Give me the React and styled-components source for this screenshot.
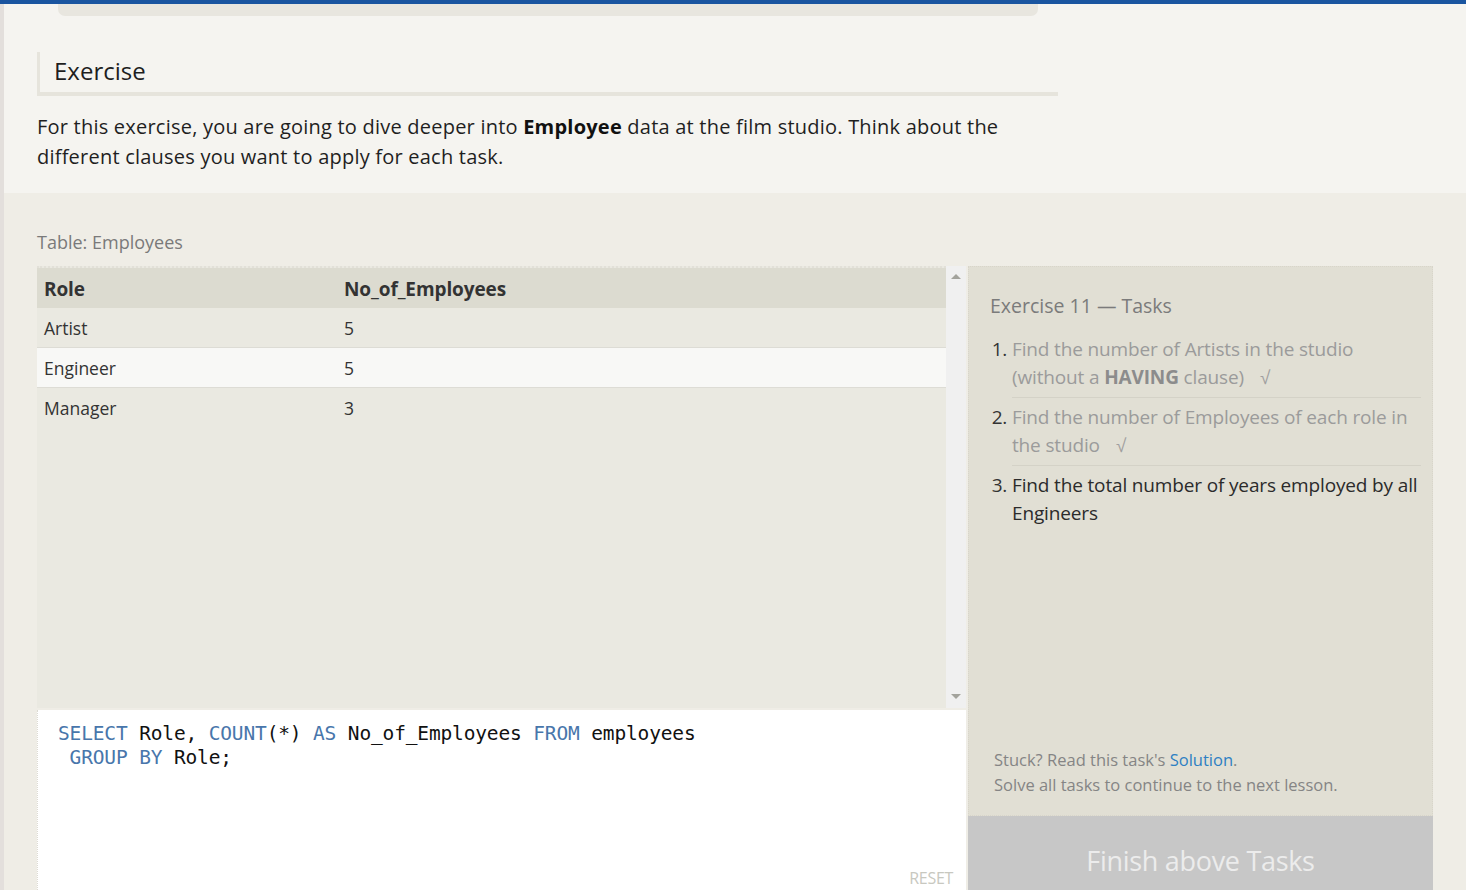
import React from "react";
import styled, { createGlobalStyle } from "styled-components";

const GlobalStyle = createGlobalStyle`
  html, body { margin: 0; padding: 0; }
  body {
    background: #efede6;
    font-family: "Open Sans", "Noto Sans", sans-serif;
    color: #333;
    overflow: hidden;
  }
`;

const TopBar = styled.div`
  height: 4px;
  background: #1a55a0;
`;

const Shell = styled.div`
  display: flex;
`;

const LeftStrip = styled.div`
  width: 4px;
  flex: none;
  background: #e3dfdc;
`;

const Main = styled.main`
  flex: 1;
  min-width: 0;
`;

const Intro = styled.section`
  background: #f5f4f0;
  padding: 0 0 21px 33px;
`;

const TabStrip = styled.div`
  margin-left: 21px;
  width: 980px;
  height: 12px;
  background: #e8e6df;
  border-radius: 0 0 7px 7px;
`;

const Heading = styled.h2`
  margin: 36px 0 0;
  width: 1004px;
  padding: 5px 0 7px 14px;
  border-left: 3px solid #e6e4dc;
  border-bottom: 4px solid #e6e4dc;
  font-family: "Open Sans", sans-serif;
  font-weight: 400;
  font-size: 24px;
  line-height: 28px;
  letter-spacing: 0;
  color: #1e1e1e;
`;

const Lead = styled.p`
  margin: 16px 0 0;
  font-size: 20px;
  line-height: 30px;
  color: #1f1f1f;
  letter-spacing: 0.22px;
  b { font-weight: 700; color: #111; }
`;

const Workspace = styled.section`
  padding: 37px 33px 0 33px;
`;

const Caption = styled.div`
  font-size: 18px;
  line-height: 24px;
  color: #7a7a7a;
  margin-bottom: 12px;
`;

const Grid = styled.div`
  display: grid;
  grid-template-columns: 929px 465px;
  column-gap: 2px;
`;

const LeftCol = styled.div`
  display: flex;
  flex-direction: column;
  gap: 2px;
`;

const TableFrame = styled.div`
  display: flex;
  height: 442px;
`;

const TableArea = styled.div`
  flex: 1;
  background: #eae9e1;
  border-top: 2px dotted #e2e0d8;
`;

const DataTable = styled.table`
  width: 100%;
  border-collapse: collapse;
  font-size: 17.5px;
`;

const HeadCell = styled.th`
  box-sizing: border-box;
  text-align: left;
  font-weight: 700;
  font-size: 19px;
  letter-spacing: -0.1px;
  color: #333;
  background: #dcdbd0;
  height: 40px;
  padding: 2px 7px 0;
  width: ${(p) => p.$w || "auto"};
`;

const Row = styled.tr`
  background: ${(p) => (p.$hl ? "#f8f8f6" : "transparent")};
  border-top: ${(p) => (p.$hl ? "1px solid #dddcd5" : "none")};
  border-bottom: ${(p) => (p.$hl ? "1px solid #dddcd5" : "none")};
`;

const Cell = styled.td`
  height: 39px;
  padding: 0 7px;
  color: #333;
`;

const Scrollbar = styled.div`
  width: 20px;
  background: #f0f0f0;
  display: flex;
  flex-direction: column;
  justify-content: space-between;
  align-items: center;
  padding: 8px 0 9px;
  box-sizing: border-box;
`;

const Arrow = styled.div`
  width: 0;
  height: 0;
  border-left: 5px solid transparent;
  border-right: 5px solid transparent;
  ${(p) =>
    p.$down
      ? "border-top: 5px solid #a3a39c;"
      : "border-bottom: 5px solid #a3a39c;"}
`;

const Editor = styled.div`
  position: relative;
  height: 190px;
  background: #fff;
  border-left: 1px dotted #dcdad2;
  padding: 12px 20px;
  box-sizing: border-box;
`;

const Code = styled.pre`
  margin: 0;
  font-family: "DejaVu Sans Mono", "Liberation Mono", monospace;
  font-size: 19.5px;
  line-height: 24px;
  color: #111;
  letter-spacing: -0.15px;
`;

const Kw = styled.span`
  color: #4876ab;
`;

const Reset = styled.span`
  position: absolute;
  right: 13px;
  top: 157px;
  font-size: 16px;
  line-height: 22px;
  color: #c8c8c0;
  letter-spacing: -0.3px;
`;

const RightCol = styled.div`
  display: flex;
  flex-direction: column;
`;

const TaskPanel = styled.div`
  height: 550px;
  box-sizing: border-box;
  background: #e1dfd4;
  border: 1px dotted #d8d5ca;
  padding: 25px 11px 18px 21px;
  display: flex;
  flex-direction: column;
`;

const TaskTitle = styled.h3`
  margin: 0;
  font-weight: 400;
  font-size: 19.5px;
  line-height: 28px;
  color: #7b7b7b;
`;

const TaskList = styled.ol`
  margin: 15px 0 0;
  padding: 0 0 0 22px;
  font-size: 19px;
  line-height: 28px;
  letter-spacing: -0.15px;
`;

const Task = styled.li`
  padding: 0 0 5px 0;
  margin-bottom: 5px;
  border-bottom: ${(p) => (p.$last ? "none" : "1px solid #d4d2c7")};
  color: ${(p) => (p.$done ? "#9b9b9b" : "#2b2b2b")};
  &::marker { color: #333; }
  b { color: #8c8c8c; font-weight: 700; }
`;

const Check = styled.span`
  margin-left: 16px;
  color: #a0a0a0;
  font-family: "Liberation Sans", sans-serif;
  font-size: 19px;
`;

const Help = styled.div`
  margin-top: auto;
  font-size: 16.5px;
  line-height: 25px;
  color: #858585;
  padding-left: 4px;
`;

const Link = styled.a`
  color: #2e7fc3;
  text-decoration: none;
`;

const FinishButton = styled.button`
  height: 88px;
  padding: 0;
  border: none;
  background: #c7c7c7;
  color: #ececec;
  font-family: "Open Sans", sans-serif;
  font-size: 27px;
  letter-spacing: -0.3px;
  cursor: default;
`;

const rows = [
  ["Artist", "5"],
  ["Engineer", "5"],
  ["Manager", "3"],
];

export default function App() {
  return (
    <>
      <GlobalStyle />
      <TopBar />
      <Shell>
        <LeftStrip />
        <Main>
          <Intro>
            <TabStrip />
            <Heading>Exercise</Heading>
            <Lead>
              For this exercise, you are going to dive deeper into <b>Employee</b> data at the film studio. Think about the
              <br />
              different clauses you want to apply for each task.
            </Lead>
          </Intro>
          <Workspace>
            <Caption>Table: Employees</Caption>
            <Grid>
              <LeftCol>
                <TableFrame>
                  <TableArea>
                    <DataTable>
                      <thead>
                        <tr>
                          <HeadCell $w="300px">Role</HeadCell>
                          <HeadCell>No_of_Employees</HeadCell>
                        </tr>
                      </thead>
                      <tbody>
                        {rows.map(([r, n], i) => (
                          <Row key={r} $hl={i === 1}>
                            <Cell>{r}</Cell>
                            <Cell>{n}</Cell>
                          </Row>
                        ))}
                      </tbody>
                    </DataTable>
                  </TableArea>
                  <Scrollbar>
                    <Arrow />
                    <Arrow $down />
                  </Scrollbar>
                </TableFrame>
                <Editor>
                  <Code>
                    <Kw>SELECT</Kw> Role, <Kw>COUNT</Kw>(*) <Kw>AS</Kw> No_of_Employees <Kw>FROM</Kw> employees
                    {"\n "}
                    <Kw>GROUP</Kw> <Kw>BY</Kw> Role;
                  </Code>
                  <Reset>RESET</Reset>
                </Editor>
              </LeftCol>
              <RightCol>
                <TaskPanel>
                  <TaskTitle>Exercise 11 — Tasks</TaskTitle>
                  <TaskList>
                    <Task $done>
                      Find the number of Artists in the studio (without a <b>HAVING</b> clause)
                      <Check>√</Check>
                    </Task>
                    <Task $done>
                      Find the number of Employees of each role in the studio
                      <Check>√</Check>
                    </Task>
                    <Task $last>Find the total number of years employed by all Engineers</Task>
                  </TaskList>
                  <Help>
                    Stuck? Read this task's <Link href="#">Solution</Link>.
                    <br />
                    Solve all tasks to continue to the next lesson.
                  </Help>
                </TaskPanel>
                <FinishButton>Finish above Tasks</FinishButton>
              </RightCol>
            </Grid>
          </Workspace>
        </Main>
      </Shell>
    </>
  );
}
